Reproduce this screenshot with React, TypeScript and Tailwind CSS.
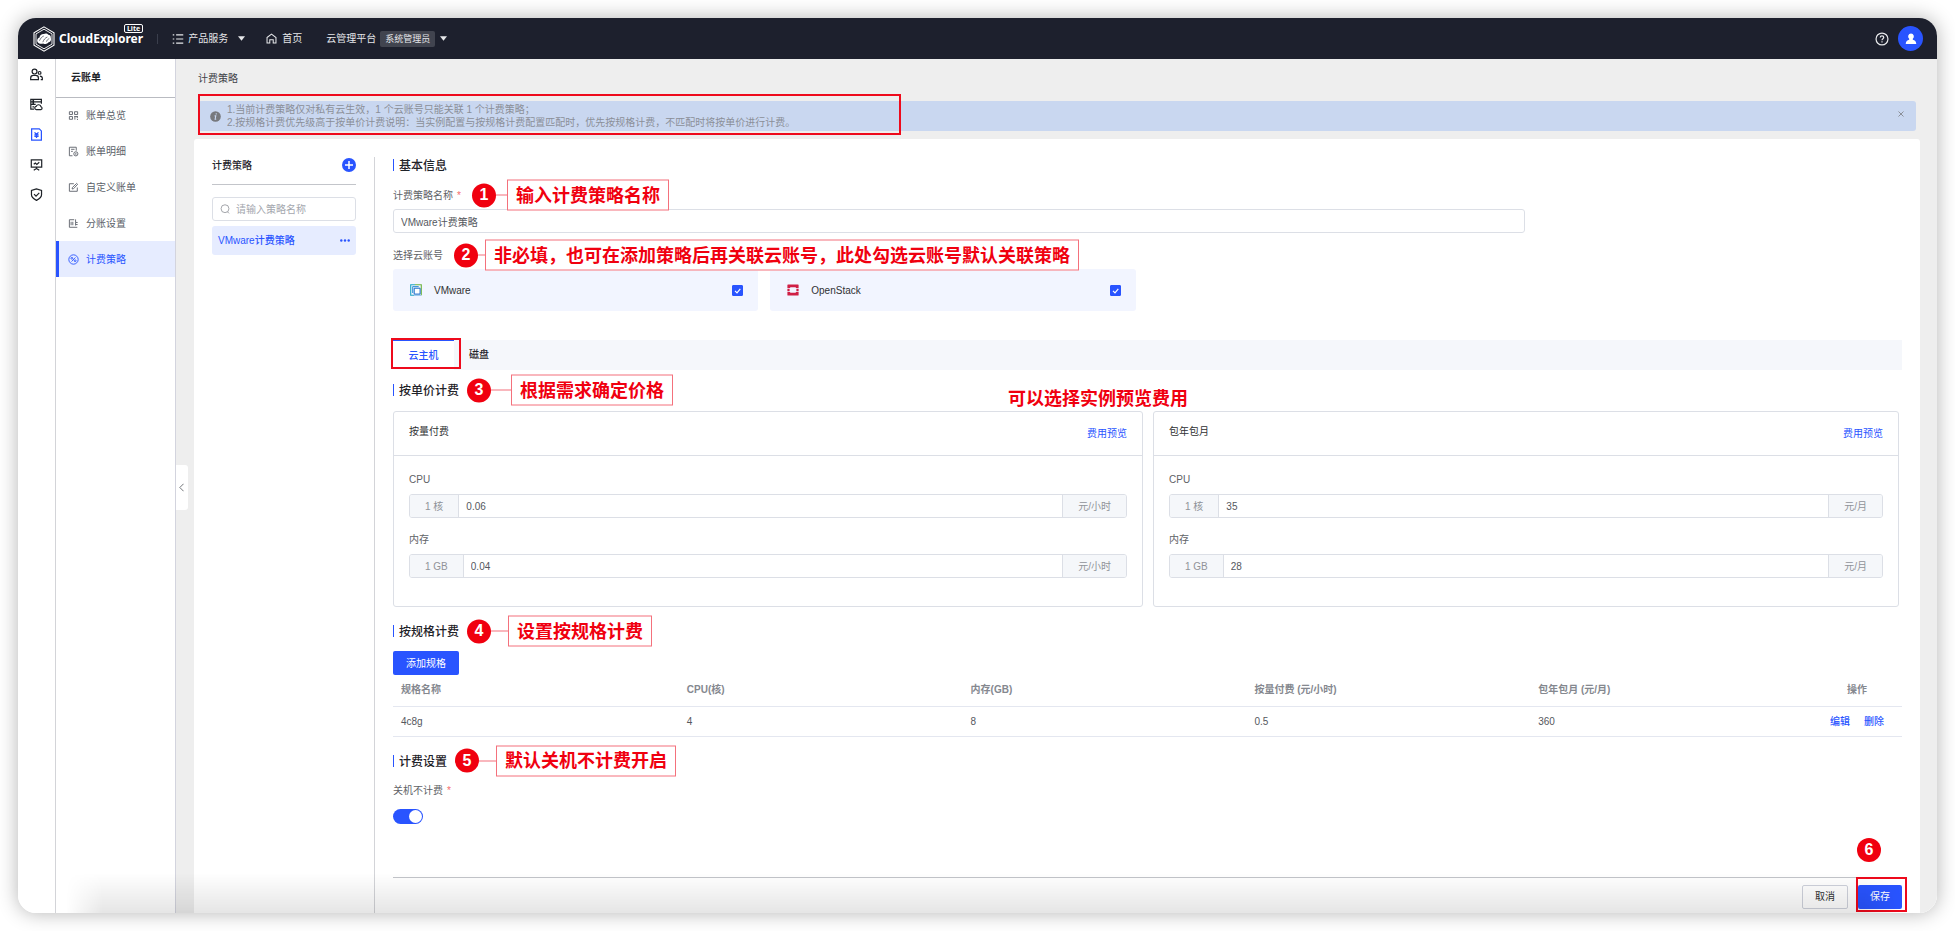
import type { ReactNode } from "react";

type IconProps = { className?: string };

function Glyph({ className = "size-3", width = 1.3, children }: IconProps & { width?: number; children: ReactNode }) {
  return (
    <svg viewBox="0 0 16 16" className={className} fill="none" stroke="currentColor" strokeWidth={width} aria-hidden="true">
      {children}
    </svg>
  );
}

const railItems: { label: string; active?: boolean; icon: ReactNode }[] = [
  {
    label: "用户",
    icon: (
      <>
        <circle cx="5.600" cy="4.400" r="3" />
        <path d="M.8 14.200v-1.700c0-2 1.500-3.300 3.500-3.300h2.600c2 0 3.500 1.300 3.500 3.300v1.700z" />
        <circle cx="11.800" cy="6" r="1.700" />
        <path d="M12.200 10c1.800.2 3 1.300 3 2.700v1.500h-2" />
      </>
    ),
  },
  {
    label: "云主机",
    icon: (
      <>
        <path d="M14 7V1.800H1v6h6M1 7.800v6h4M1 4.800h13M3 3.300h2M3 6.300h2M3 11h2" />
        <path d="M8 14.200a2 2 0 0 1-.3-4 3.100 3.100 0 0 1 5.900.6 1.800 1.800 0 0 1 0 3.400z" />
      </>
    ),
  },
  {
    label: "账单",
    active: true,
    icon: (
      <>
        <path d="M2 1h9.400L14 3.600V15H2z" />
        <path d="M5.600 5.400 8 8l2.400-2.600M5.400 8.400h5.200M5.400 10.400h5.200M8 8v4.400" strokeWidth="1.600" />
      </>
    ),
  },
  {
    label: "运营分析",
    icon: (
      <>
        <path d="M1.600 2.200h12.800v9H1.600zM8 11.200v2M4.600 15 8 12.800l3.400 2.200" />
        <path d="m4.600 7.800 2-1.600 1.800 1.600 3-2.600" />
      </>
    ),
  },
  {
    label: "安全合规",
    icon: (
      <>
        <path d="M8 1 1.800 3v5.400c0 3 2.600 5 6.200 6.800 3.600-1.800 6.200-3.800 6.200-6.800V3z" />
        <path d="m5 7.600 2.400 2.400 4-4" />
      </>
    ),
  },
];

const menuItems: { label: string; active?: boolean; icon: ReactNode }[] = [
  {
    label: "账单总览",
    icon: <path d="M2 2.500h4.500V6.500H2zM2 9.500h4.500v4H2zM9.500 2.500H14V6.500H9.500zM9 9.500h5.500M10 9.500v4.500M13.500 9.500v2.500M13 13.800h1.500" />,
  },
  {
    label: "账单明细",
    icon: (
      <>
        <path d="M6.500 14.200H2V1.800h10v5M4.500 4.800h5M4.500 7.800H7" />
        <circle cx="11.400" cy="11.400" r="3" />
        <path d="M11.400 10v2.800" />
      </>
    ),
  },
  { label: "自定义账单", icon: <path d="M8.500 2.500H2v11h11.500V8M6 10.200l.4-2.200L12.600 2 14 3.400 8 9.800z" /> },
  { label: "分账设置", icon: <path d="M9 2.500H2v11h11.500M4.500 5.500v5M7 5.500v5M11 2v4.500h3M11 9.500h3M11 6.500v4.500" /> },
  {
    label: "计费策略",
    active: true,
    icon: (
      <>
        <circle cx="8" cy="8" r="6.800" />
        <path d="m5.200 11 5.600-6" />
        <circle cx="5.600" cy="6.200" r="1.300" />
        <circle cx="10.400" cy="9.800" r="1.300" />
      </>
    ),
  },
];

const columns = ["规格名称", "CPU(核)", "内存(GB)", "按量付费 (元/小时)", "包年包月 (元/月)"];
const specs = [["4c8g", "4", "8", "0.5", "360"]];

function Caret() {
  return (
    <svg viewBox="0 0 8 5" className="h-[5px] w-[7px]" fill="currentColor" aria-hidden="true">
      <path d="M0 0h8L4 5z" />
    </svg>
  );
}

function Badge({ n }: { n: number }) {
  return (
    <span className="flex size-6 shrink-0 items-center justify-center rounded-full bg-[#f0000f] pb-px text-[16px] leading-none font-bold text-white">
      {n}
    </span>
  );
}

function Callout({ n, line, children }: { n: number; line: string; children: ReactNode }) {
  return (
    <span className="absolute top-1/2 left-full z-10 ml-2 flex -translate-y-1/2 items-center whitespace-nowrap">
      <Badge n={n} />
      <span className={`h-px bg-[#f4717c] ${line}`} />
      <span className="flex h-[31px] items-center border border-[#f4717c] bg-white px-2 text-[18px] leading-none font-bold text-[#f0000f]">
        {children}
      </span>
    </span>
  );
}

function Heading({ children, callout }: { children: ReactNode; callout?: ReactNode }) {
  return (
    <div className="relative flex h-4 w-fit items-start gap-[5px] text-[12px] leading-[18px] font-medium text-[#1f2329]">
      <span className="mt-[2px] h-3 w-px bg-[#2954ff]" />
      <h2>{children}</h2>
      {callout}
    </div>
  );
}

function Amount({ id, label, unit, value, suffix }: { id: string; label: string; unit: string; value: string; suffix: string }) {
  return (
    <div className="flex flex-col gap-[7px]">
      <label htmlFor={id} className="h-4 text-[#606266]">
        {label}
      </label>
      <div className="flex h-6 overflow-hidden rounded-[3px] border border-[#dcdfe6]">
        <span className="flex items-center border-r border-[#dcdfe6] bg-[#f5f7fa] px-[15px] pt-px text-[#909399]">{unit}</span>
        <input id={id} defaultValue={value} className="min-w-0 flex-1 bg-white px-[7px] pt-px text-[#55585e] outline-none" />
        <span className="flex items-center border-l border-[#dcdfe6] bg-[#f5f7fa] px-[15px] pt-px text-[#909399]">{suffix}</span>
      </div>
    </div>
  );
}

function PriceCard({ id, title, cpu, memory, suffix }: { id: string; title: string; cpu: string; memory: string; suffix: string }) {
  return (
    <section className="min-w-0 rounded-[3px] border border-[#dcdfe6]">
      <header className="flex h-11 items-center justify-between border-b border-[#dcdfe6] px-[15px] pb-1">
        <h3 className="text-[#303133]">{title}</h3>
        <button type="button" className="pt-1 text-[#2954ff]">
          费用预览
        </button>
      </header>
      <div className="flex flex-col gap-[13px] px-[15px] pt-[15px] pb-7">
        <Amount id={`${id}-cpu`} label="CPU" unit="1 核" value={cpu} suffix={suffix} />
        <Amount id={`${id}-memory`} label="内存" unit="1 GB" value={memory} suffix={suffix} />
      </div>
    </section>
  );
}

function AccountCard({ name, icon }: { name: string; icon: ReactNode }) {
  return (
    <label className="flex h-[42px] flex-1 items-center rounded-[3px] bg-[#f2f5ff] pr-[15px] pl-[17px] text-[#303133]">
      {icon}
      <span className="ml-3 flex-1 pt-px">{name}</span>
      <span className="relative size-[11px]">
        <input type="checkbox" defaultChecked className="block size-[11px] appearance-none rounded-[1px] border border-[#2954ff] bg-white checked:bg-[#2954ff]" />
        <svg viewBox="0 0 11 11" className="pointer-events-none absolute inset-0 size-[11px]" fill="none" stroke="white" strokeWidth="1.200" aria-hidden="true">
          <path d="m3 5.800 2 2 3.300-4" />
        </svg>
      </span>
    </label>
  );
}

function VMwareIcon() {
  return (
    <svg viewBox="0 0 12 12" className="size-3" fill="none" aria-hidden="true">
      <path d="M11.300 11.300V.7H5" stroke="#6db33f" strokeWidth="1.100" />
      <path d="M5 .7H.7v10.600H4" stroke="#1fa5c4" strokeWidth="1.100" />
      <path d="M4 11.300h7.300" stroke="#8cc2e8" strokeWidth="1" />
      <path d="M2.700 9v-6.400h6" stroke="#1784d0" strokeWidth=".9" />
      <path d="M4.200 4.200h5.900v5.900H4.200z" fill="white" stroke="#1467c8" strokeWidth="1" />
    </svg>
  );
}

function OpenStackIcon() {
  return (
    <svg viewBox="0 0 12 12" className="size-3" fill="#d01f45" aria-hidden="true">
      <path d="M1 .5h10a.6.6 0 0 1 .6.600V4H8.800V3.200H3.200V4H.4V1.100A.6.6 0 0 1 1 .5zM.4 8h2.800v.8h5.600V8h2.800v2.900a.6.6 0 0 1-.6.600H1a.6.6 0 0 1-.6-.6z" />
      <path d="M.4 4.700h2.200v2.600H.4zM9.400 4.700h2.200v2.600H9.400z" />
    </svg>
  );
}

function TopBar() {
  return (
    <header className="flex h-[41px] items-center bg-[#1d202d] pr-[14px] pl-[15px] text-[#e6e7ea]">
      <a href="#" className="flex items-center" aria-label="CloudExplorer Lite">
        <svg viewBox="0 0 22 26" className="h-[26px] w-[22px]" fill="none" aria-hidden="true">
          <path d="M11 .9 21 6.800v12.400L11 25.100 1 19.200V6.800z" stroke="white" strokeWidth="1.100" />
          <path d="M11 3.200 19 7.900v10.200l-8 4.700-8-4.700V7.900z" stroke="white" strokeWidth=".9" />
          <path d="M4.300 15.500c-.5-2 .6-3.700 2.200-4.100.2-2.200 2.300-3.700 4.500-3.400 1.200-1 3.500-.7 4.300.8 1.800.2 2.800 1.600 2.500 3.200.9 2.200-.5 4.300-2.600 4.500-1.100 1.600-3.600 1.900-5 .9-2 1-5 .4-5.900-1.900z" fill="white" />
          <path d="M6.500 14.700c1-2.500 2.500-4 4.300-4.700M9.800 16.200c.9-2.500 2.500-4.500 4.600-5.200M13.500 15.700c.4-1.500 1.400-2.600 2.700-3" stroke="#1d202d" strokeWidth=".6" />
        </svg>
        <span className="relative ml-1 pt-px font-['Noto_Sans',sans-serif] text-[12px] leading-4 font-bold text-white">
          CloudExplorer
          <span className="absolute right-0 bottom-full -mb-[3px] flex h-[9px] items-center rounded-[2px] border border-white px-[2px] text-[7px] leading-none">
            Lite
          </span>
        </span>
      </a>
      <span className="ml-[14px] h-[10px] w-px bg-[#3a3e4c]" />
      <nav className="flex items-center">
        <button type="button" className="ml-[14px] flex items-center">
          <Glyph className="size-3" width={1.5}>
            <path d="M1 2.500h2M1 8h2M1 13.500h2M5.500 2.500H15M5.500 8H15M5.500 13.500H15" />
          </Glyph>
          <span className="mr-[10px] ml-1">产品服务</span>
          <Caret />
        </button>
        <a href="#" className="ml-[21px] flex items-center gap-[5px]">
          <Glyph className="size-[11px]" width={1.5}>
            <path d="M1.500 6.500 8 1.500l6.500 5v8h-4V9.800h-5v4.700h-4z" />
          </Glyph>
          首页
        </a>
        <button type="button" className="ml-6 flex items-center">
          云管理平台
          <span className="mr-[5px] ml-1 flex h-4 items-center rounded-[2px] bg-[#41444f] px-[5px] text-[9px]">系统管理员</span>
          <Caret />
        </button>
      </nav>
      <button type="button" aria-label="帮助" className="ml-auto">
        <Glyph className="size-[14px]" width={1.4}>
          <circle cx="8" cy="8" r="6.800" />
          <path d="M6 6.400c0-1.300.9-2 2-2s2 .7 2 1.800c0 1.400-2 1.500-2 3.200M8 10.600v1.300" />
        </Glyph>
      </button>
      <button type="button" aria-label="个人中心" className="ml-[9px] flex size-[25px] items-center justify-center rounded-full bg-[#2954ff]">
        <svg viewBox="0 0 12 12" className="size-3 text-white" fill="currentColor" aria-hidden="true">
          <path d="M6 .5a3 3 0 0 1 1.800 5.300v.9c2 .3 3.300 1.400 3.500 4.300H.7c.2-2.900 1.500-4 3.500-4.300v-.9A3 3 0 0 1 6 .5z" />
        </svg>
      </button>
    </header>
  );
}

export default function App() {
  return (
    <div className="min-h-screen bg-white p-[18px] font-['Liberation_Sans','Noto_Sans_CJK_SC',sans-serif] text-[10px] leading-[18px]" lang="zh-CN">
      <div className="relative flex min-h-[calc(100vh-36px)] flex-col rounded-[18px] shadow-[0_0_20px_rgba(0,0,0,0.3)]">
        <div className="relative flex flex-1 flex-col overflow-hidden rounded-[18px] bg-white">
          <TopBar />
          <div className="flex flex-1">
            <nav className="flex w-[38px] flex-col items-center gap-[17px] border-r border-[#d3d4d8] pt-[9px] pr-px">
              {railItems.map((item) => (
                <a key={item.label} href="#" aria-label={item.label} className={item.active ? "text-[#2954ff]" : "text-[#1f2329]"}>
                  <Glyph className="size-[13px]" width={1.5}>
                    {item.icon}
                  </Glyph>
                </a>
              ))}
            </nav>

            <nav className="w-[120px] border-r border-[#d3d4de]">
              <h1 className="flex h-[39px] items-center border-b border-[#b9bbc1] pl-[15px] font-bold text-[#1f2329]">云账单</h1>
              <div className="-mt-px">
                {menuItems.map((item) => (
                  <a
                    key={item.label}
                    href="#"
                    className={
                      item.active
                        ? "flex h-9 items-center gap-[7px] border-l-[3px] border-[#2954ff] bg-[#e6ecff] pl-[9px] text-[#2954ff]"
                        : "flex h-9 items-center gap-[7px] border-l-[3px] border-transparent pl-[9px] text-[#5b5f69]"
                    }
                  >
                    <Glyph className="size-[11px]">{item.icon}</Glyph>
                    <span className="pt-[2px]">{item.label}</span>
                  </a>
                ))}
              </div>
            </nav>

            <main className="relative flex min-w-0 flex-1 flex-col bg-[#eeeeee] pr-[17px] pl-[18px]">
              <button type="button" aria-label="收起菜单" className="absolute top-[406px] left-0 flex h-[45px] w-3 items-center justify-center rounded-r-[3px] bg-white pr-px text-[#55585e]">
                <svg viewBox="0 0 6 10" className="h-[9px] w-[5px]" fill="none" stroke="currentColor" aria-hidden="true">
                  <path d="M5.500.5 1 5l4.500 4.500" />
                </svg>
              </button>

              <h2 className="mx-1 flex h-[42px] items-center pb-[2px] text-[#3f4248]">计费策略</h2>

              <div role="alert" className="relative mx-1 flex h-[30px] items-center rounded-[3px] bg-[#c9d7f0] px-3 text-[#8b8f98]">
                <svg viewBox="0 0 12 12" className="size-[11px]" aria-hidden="true">
                  <circle cx="6" cy="6" r="5.800" fill="#77797e" />
                  <path d="M6.800 2.500v1.300M5 5.300h1.300L5.600 9h1.200" stroke="#c9d7f0" strokeWidth="1.200" fill="none" />
                </svg>
                <p className="ml-[6px] leading-[13px]">
                  1.当前计费策略仅对私有云生效，1 个云账号只能关联 1 个计费策略；
                  <br />
                  2.按规格计费优先级高于按单价计费说明：当实例配置与按规格计费配置匹配时，优先按规格计费，不匹配时将按单价进行计费。
                </p>
                <button type="button" aria-label="关闭" className="ml-auto pb-1 text-[#8b8f98]">
                  <svg viewBox="0 0 6 6" className="size-[6px]" fill="none" stroke="currentColor" aria-hidden="true">
                    <path d="m.5.5 5 5m0-5-5 5" />
                  </svg>
                </button>
                <span className="pointer-events-none absolute -top-[7px] left-0 h-[41px] w-[703px] border-2 border-[#ee0a1c]" />
              </div>

              <div className="mt-2 flex flex-1 rounded-t-[3px] bg-white pt-[18px]">
                <aside className="w-[181px] shrink-0 border-r border-[#d3d4d8] px-[18px]">
                  <div className="flex h-7 items-start justify-between border-b border-[#c3c5ca]">
                    <h3 className="font-medium text-[#1f2329]">计费策略</h3>
                    <button type="button" aria-label="添加策略" className="pt-px">
                      <svg viewBox="0 0 14 14" className="size-[14px]" aria-hidden="true">
                        <circle cx="7" cy="7" r="7" fill="#2954ff" />
                        <path d="M7 3v8M3 7h8" stroke="white" strokeWidth="1.500" />
                      </svg>
                    </button>
                  </div>
                  <label className="mt-3 flex h-6 items-center rounded-[3px] border border-[#dcdfe6] pl-[7px]">
                    <Glyph className="size-[10px] text-[#909399]">
                      <circle cx="8" cy="7.500" r="6.300" />
                      <path d="m12 12.500 2.500 2.500" />
                    </Glyph>
                    <input
                      aria-label="策略名称"
                      placeholder="请输入策略名称"
                      className="ml-[6px] min-w-0 flex-1 bg-transparent pt-px outline-none placeholder:text-[#a4a7ae]"
                    />
                  </label>
                  <div className="mt-[5px] flex h-[29px] items-center justify-between rounded-[3px] bg-[#e6ecff] px-[6px] text-[#2954ff]">
                    <a href="#" className="font-medium">
                      VMware计费策略
                    </a>
                    <button type="button" aria-label="更多">
                      <svg viewBox="0 0 10 3" className="h-[3px] w-[10px]" fill="currentColor" aria-hidden="true">
                        <circle cx="1.300" cy="1.500" r="1.200" />
                        <circle cx="5" cy="1.500" r="1.200" />
                        <circle cx="8.700" cy="1.500" r="1.200" />
                      </svg>
                    </button>
                  </div>
                </aside>

                <form className="flex min-w-0 flex-1 flex-col px-[18px]">
                  <Heading>基本信息</Heading>

                  <div className="relative mt-[14px] h-4 w-fit text-[#606266]">
                    <label htmlFor="policy-name" className="flex pr-[3px]">
                      计费策略名称<span className="ml-1 text-[#f56c6c]">*</span>
                    </label>
                    <Callout n={1} line="w-[11px]">输入计费策略名称</Callout>
                  </div>
                  <input
                    id="policy-name"
                    defaultValue="VMware计费策略"
                    className="mt-[6px] h-6 w-3/4 rounded-[3px] border border-[#dcdfe6] px-[7px] text-[#55585e] outline-none"
                  />

                  <div className="relative mt-[14px] h-4 w-fit pr-[3px] text-[#606266]">
                    选择云账号
                    <Callout n={2} line="w-[7px]">非必填，也可在添加策略后再关联云账号，此处勾选云账号默认关联策略</Callout>
                  </div>
                  <div className="mt-[6px] flex w-[calc(50%-12px)] min-w-[742px] gap-3">
                    <AccountCard name="VMware" icon={<VMwareIcon />} />
                    <AccountCard name="OpenStack" icon={<OpenStackIcon />} />
                  </div>

                  <div role="tablist" className="mt-[29px] flex h-[30px] bg-[#f5f7fb]">
                    <button type="button" role="tab" aria-selected="true" className="relative w-[61px] border-t border-[#2954ff] bg-white font-medium text-[#2954ff]">
                      云主机
                      <span className="pointer-events-none absolute -top-[3px] -left-[2px] h-[31px] w-[70px] border-2 border-[#ee0a1c]" />
                    </button>
                    <button type="button" role="tab" aria-selected="false" className="px-[15px] font-medium text-[#1f2329]">
                      磁盘
                    </button>
                  </div>

                  <div className="relative mt-3">
                    <Heading callout={<Callout n={3} line="w-5">根据需求确定价格</Callout>}>按单价计费</Heading>
                    <span className="absolute top-2 left-[615px] text-[18px] leading-[18px] font-bold whitespace-nowrap text-[#f0000f]">可以选择实例预览费用</span>
                  </div>
                  <div className="mt-[13px] mr-[3px] grid grid-cols-[750fr_746fr] gap-[10px]">
                    <PriceCard id="hourly" title="按量付费" cpu="0.06" memory="0.04" suffix="元/小时" />
                    <PriceCard id="monthly" title="包年包月" cpu="35" memory="28" suffix="元/月" />
                  </div>

                  <div className="mt-4">
                    <Heading callout={<Callout n={4} line="w-[17px]">设置按规格计费</Callout>}>按规格计费</Heading>
                  </div>
                  <button type="button" className="mt-3 h-6 w-fit rounded-[2px] bg-[#2954ff] px-[13px] pt-px text-white">
                    添加规格
                  </button>
                  <table className="w-full table-fixed text-left">
                    <thead>
                      <tr className="h-[31px] border-b border-[#e4e7f0] text-[#85888f]">
                        {columns.map((name) => (
                          <th key={name} className="px-[10px] font-bold first:pl-2">
                            {name}
                          </th>
                        ))}
                        <th className="w-[90px] text-center font-bold">操作</th>
                      </tr>
                    </thead>
                    <tbody>
                      {specs.map((row) => (
                        <tr key={row[0]} className="h-[30px] border-b border-[#e4e7f0] text-[#55585e]">
                          {row.map((cell, i) => (
                            <td key={columns[i]} className="px-[10px] pt-px first:pl-2">
                              {cell}
                            </td>
                          ))}
                          <td className="pt-px text-center font-medium text-[#2954ff]">
                            <button type="button">编辑</button>
                            <button type="button" className="ml-[14px]">
                              删除
                            </button>
                          </td>
                        </tr>
                      ))}
                    </tbody>
                  </table>

                  <div className="mt-4">
                    <Heading callout={<Callout n={5} line="w-[17px]">默认关机不计费开启</Callout>}>计费设置</Heading>
                  </div>
                  <label htmlFor="shutdown-free" className="mt-[13px] flex h-4 w-fit text-[#606266]">
                    关机不计费<span className="ml-1 text-[#f56c6c]">*</span>
                  </label>
                  <input
                    id="shutdown-free"
                    type="checkbox"
                    role="switch"
                    defaultChecked
                    className="mt-[11px] mb-4 flex h-[15px] w-[30px] shrink-0 appearance-none items-center rounded-full bg-[#c0c4cc] px-px before:size-[13px] before:rounded-full before:bg-white checked:justify-end checked:bg-[#2954ff]"
                  />

                  <footer className="mt-auto flex h-9 items-start justify-end gap-[10px] border-t border-[#c3c5ca] pt-[7px]">
                    <button type="button" className="h-6 w-[46px] rounded-[2px] border border-[#cfd2dc] bg-white text-[#303133]">
                      取消
                    </button>
                    <div className="relative">
                      <button type="submit" className="h-6 w-[44px] rounded-[2px] bg-[#2954ff] text-white">
                        保存
                      </button>
                      <span className="pointer-events-none absolute -top-[8px] -left-[2px] h-[35px] w-[51px] border-2 border-[#ee0a1c]" />
                      <span className="absolute right-[21px] bottom-full mb-[23px]">
                        <Badge n={6} />
                      </span>
                    </div>
                  </footer>
                </form>
              </div>
            </main>
          </div>
          <div className="pointer-events-none absolute right-9 bottom-0 left-12 h-10 bg-linear-to-t from-black/10 to-transparent mask-x-from-98% mask-x-to-100%" />
        </div>
      </div>
    </div>
  );
}
